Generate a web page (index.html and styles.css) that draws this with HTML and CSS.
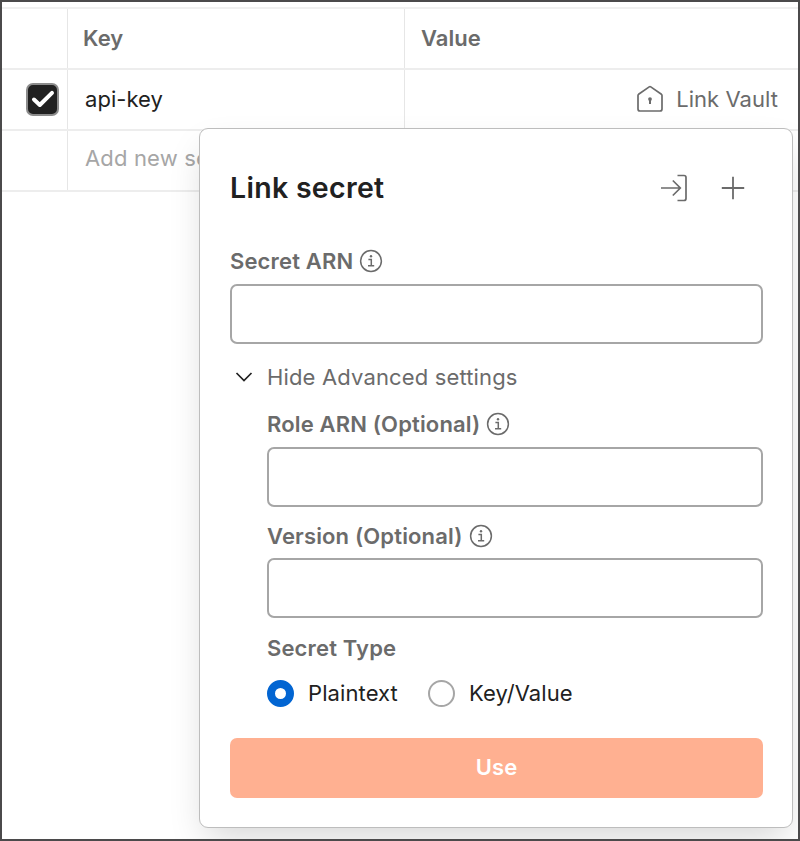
FILE: index.html
```
<!DOCTYPE html>
<html>
<head>
<meta charset="utf-8" />
<title>Link secret</title>
<link rel="stylesheet" href="styles.css">
</head>
<body>
<div class="frame">
	<div class="table">
		<div class="row head">
			<div class="cell check"></div>
			<div class="cell key">Key</div>
			<div class="cell value">Value</div>
		</div>
		<div class="row">
			<div class="cell check">
				<span class="checkbox">
					<svg width="24" height="20" viewBox="0 0 24 20"><path d="M3 10.5 L8.8 16 L21 3.8" fill="none" stroke="#fff" stroke-width="4" stroke-linecap="round" stroke-linejoin="round"/></svg>
				</span>
			</div>
			<div class="cell key">api-key</div>
			<div class="cell value link">
				<svg width="28" height="28" viewBox="0 0 28 28"><path d="M2 10.6 Q2 9.8 2.6 9.3 L13.2 1.9 Q14 1.4 14.8 1.9 L25.4 9.3 Q26 9.8 26 10.6 V24 Q26 26 24 26 H4 Q2 26 2 24 Z" fill="none" stroke="#6b6b6b" stroke-width="1.7"/><circle cx="14" cy="14.1" r="1.9" fill="#6b6b6b"/><path d="M14 14 V19" stroke="#6b6b6b" stroke-width="2"/></svg>
				<span>Link Vault</span>
			</div>
		</div>
		<div class="row">
			<div class="cell check"></div>
			<div class="cell key placeholder">Add new secret</div>
			<div class="cell value"></div>
		</div>
	</div>

	<div class="popup">
		<div class="popupHead">
			<h2>Link secret</h2>
			<div class="actions">
				<svg width="28" height="28" viewBox="0 0 28 28"><path d="M1 14 H20.5 M12.8 6.5 L20.3 14 L12.8 21.5 M17.5 1.5 H24 Q26 1.5 26 3.5 V24.5 Q26 26.5 24 26.5 H17.5" fill="none" stroke="#6b6b6b" stroke-width="1.7"/></svg>
				<svg width="24" height="24" viewBox="0 0 24 24"><path d="M12 .8 V23.2 M.8 12 H23.2" fill="none" stroke="#6b6b6b" stroke-width="1.8"/></svg>
			</div>
		</div>

		<div class="label">
			<span>Secret ARN</span>
			<svg class="info" width="24" height="24" viewBox="0 0 24 24"><circle cx="12" cy="12" r="10.4"/><path d="M9.4 10.4 H12.3 V16.8 M9 16.8 H15.2"/><circle class="dot" cx="12" cy="7.3" r="1.2"/></svg>
		</div>
		<input class="field" type="text">

		<div class="toggle">
			<svg width="18" height="12" viewBox="0 0 18 12"><path d="M1.5 2 L9 9.5 L16.5 2" fill="none" stroke="#212121" stroke-width="1.7"/></svg>
			<span>Hide Advanced settings</span>
		</div>

		<div class="advanced">
			<div class="label">
				<span>Role ARN (Optional)</span>
				<svg class="info" width="24" height="24" viewBox="0 0 24 24"><circle cx="12" cy="12" r="10.4"/><path d="M9.4 10.4 H12.3 V16.8 M9 16.8 H15.2"/><circle class="dot" cx="12" cy="7.3" r="1.2"/></svg>
			</div>
			<input class="field" type="text">
			<div class="label version">
				<span>Version (Optional)</span>
				<svg class="info" width="24" height="24" viewBox="0 0 24 24"><circle cx="12" cy="12" r="10.4"/><path d="M9.4 10.4 H12.3 V16.8 M9 16.8 H15.2"/><circle class="dot" cx="12" cy="7.3" r="1.2"/></svg>
			</div>
			<input class="field" type="text">
			<div class="label type">Secret Type</div>
			<div class="radios">
				<label class="radio"><span class="circle on"></span>Plaintext</label>
				<label class="radio"><span class="circle"></span>Key/Value</label>
			</div>
		</div>

		<button class="use">Use</button>
	</div>
</div>
</body>
</html>
```
FILE: styles.css
```
*{ box-sizing: border-box;}
body{ margin: 0; font-family: Inter, "Liberation Sans", sans-serif; font-size: 22px; letter-spacing: .15px; color: #212121; background: #fff;}
.frame{ position: relative; height: 841px; padding-top: 5px; border: 2px solid #4b4a4b; overflow: hidden;}

.table{ border-top: 2px solid #f0f0f0; letter-spacing: .05px;}
.row{ display: flex; height: 61px; border-bottom: 2px solid #ededed;}
.cell{ display: flex; align-items: center; padding-bottom: 1px;}
.check{ width: 66px; justify-content: flex-end; padding: 0 8px 1px 0; border-right: 1px solid #e6e6e6;}
.key{ width: 337px; padding-left: 17px; border-right: 1px solid #e6e6e6;}
.value{ flex: 1; padding-left: 16px;}
.head{ font-weight: 600; color: #6b6b6b;}
.head .key{ padding-left: 15px;}
.link{ justify-content: flex-end; gap: 12px; padding-right: 20px; color: #6b6b6b;}
.placeholder{ color: #a6a6a6; padding-bottom: 6px; letter-spacing: .15px;}
.checkbox{ display: flex; align-items: center; justify-content: center; width: 33px; height: 33px; border: 2px solid #8c8c8c; border-radius: 7px; background: #212121;}

.popup{ position: absolute; left: 197px; top: 126px; width: 594px; height: 700px; padding: 30px 29px 0 30px; display: flex; flex-direction: column; background: #fff; border: 1px solid #bdbdbd; border-radius: 9px; box-shadow: 0 16px 36px -7px rgba(0,0,0,.17);}
.popupHead{ display: flex; align-items: center; justify-content: space-between; height: 58px; margin-bottom: 31px;}
.popupHead h2{ margin: 0; padding-bottom: 2px; font-size: 28.5px; font-weight: 600; letter-spacing: .3px;}
.actions{ display: flex; align-items: center; gap: 33px; padding-right: 18px;}
.label{ display: flex; align-items: center; gap: 6px; height: 26px; margin-bottom: 10px; font-weight: 600; color: #6b6b6b;}
.info{ fill: none; stroke: #6b6b6b; stroke-width: 1.5;}
.info .dot{ fill: #6b6b6b; stroke: none;}
.field{ display: block; width: 100%; height: 60px; padding: 0 16px; border: 2px solid #a6a6a6; border-radius: 7px; background: #fff; font: inherit; outline: none;}
.toggle{ display: flex; align-items: center; gap: 14px; height: 26px; margin: 20px 0 21px; padding-left: 5px; color: #6b6b6b;}
.advanced{ padding-left: 37px;}
.version{ margin: 16px 0 9px;}
.type{ margin: 17px 0 18px;}
.radios{ display: flex; gap: 30px; height: 28px; margin-bottom: 31px;}
.radio{ display: flex; align-items: center; gap: 14px; letter-spacing: .1px;}
.circle{ width: 27px; height: 27px; border: 2px solid #a6a6a6; border-radius: 50%;}
.circle.on{ border: 8px solid #0265d2;}
.use{ height: 60px; padding-bottom: 3px; border: 0; border-radius: 7px; background: #ffb091; color: #fff; font: inherit; font-weight: 600; letter-spacing: inherit;}
```
